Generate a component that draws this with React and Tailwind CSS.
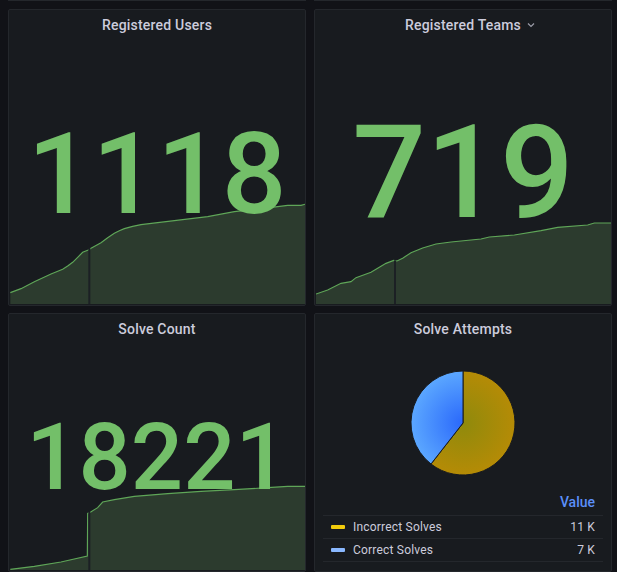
import React from 'react';

const roboto = { fontFamily: 'Roboto, sans-serif' };

// chart points are in 3x crop coordinates, viewBox maps them back down
const Spark = ({ points, gapX, box, className }) => {
  const [x, y, w, h] = box;
  const bottom = y + h;
  const line = points.map((p) => p.join(',')).join(' ');
  const first = points[0][0];
  const last = points[points.length - 1][0];
  return (
    <svg className={`absolute left-px bottom-px ${className}`} viewBox={box.join(' ')} preserveAspectRatio="none">
      <polygon points={`${first},${bottom} ${line} ${last},${bottom}`} fill="#2c3b2e" />
      <polyline points={line} fill="none" stroke="#5fa658" strokeWidth="3.5" />
      <rect x={gapX - 3} y={points.find((p) => p[0] >= gapX)[1] - 2} width="6" height={bottom} fill="#1c2024" />
    </svg>
  );
};

const Panel = ({ title, chevron, children }) => (
  <div className="relative flex flex-col overflow-hidden rounded-[2px] border border-[#24272c] bg-[#181b1f]">
    <div className="flex h-[30px] shrink-0 items-center justify-center text-[14px] font-medium tracking-[0.2px] text-[#ccccdc]">
      <span className="relative">
        {title}
        {chevron && (
          <svg className="absolute -right-[15px] top-[5px] h-[10px] w-[10px] text-[#9a9ca8]" viewBox="0 0 10 10" fill="none" stroke="currentColor" strokeWidth="1.2">
            <path d="M2 3.5 5 6.5 8 3.5" />
          </svg>
        )}
      </span>
    </div>
    {children}
  </div>
);

const BigValue = ({ value, className }) => (
  <div className={`relative z-10 flex flex-1 items-center justify-center font-medium leading-none text-[#73bf69] ${className}`}>
    {value}
  </div>
);

const usersLine = [[28,878],[60,866],[100,845],[150,822],[185,808],[200,798],[215,787],[230,772],[245,757],[262,750],[270,745],[300,728],[320,713],[340,700],[355,692],[370,686],[395,679],[420,674],[520,662],[620,650],[700,635],[760,628],[830,620],[860,616],[900,616],[915,612]];
const teamsLine = [[25,882],[60,870],[100,850],[130,845],[145,833],[190,817],[215,802],[235,790],[258,781],[268,783],[285,775],[310,758],[345,744],[385,732],[430,726],[520,717],[545,711],[620,705],[700,692],[750,682],[840,675],[860,669],[912,669]];
const solvesLine = [[28,793],[100,784],[180,771],[259,753],[260,625],[268,622],[290,608],[305,591],[340,584],[400,574],[500,566],[600,559],[700,554],[800,548],[860,544],[915,544]];

const Pie = () => (
  <svg className="h-[106px] w-[106px]" viewBox="-53 -53 106 106">
    <defs>
      <radialGradient id="yellowPie" gradientUnits="userSpaceOnUse" cx="0" cy="0" r="52">
        <stop offset="0" stopColor="#8f8a0c" />
        <stop offset="1" stopColor="#b58b06" />
      </radialGradient>
      <radialGradient id="bluePie" gradientUnits="userSpaceOnUse" cx="0" cy="0" r="52">
        <stop offset="0" stopColor="#2a68fb" />
        <stop offset="1" stopColor="#5ba7ff" />
      </radialGradient>
    </defs>
    <path d="M0 0 0 -52 A52 52 0 1 1 -32 41 Z" fill="url(#yellowPie)" stroke="#181b1f" strokeWidth="1" />
    <path d="M0 0 -32 41 A52 52 0 0 1 0 -52 Z" fill="url(#bluePie)" stroke="#181b1f" strokeWidth="1" />
  </svg>
);

const LegendRow = ({ color, name, value }) => (
  <div className="flex h-[23px] items-center border-b border-[#24272c] pl-2 pr-2 text-[12px] tracking-[0.2px] text-[#ccccdc]">
    <span className={`mr-2 h-[4px] w-[14px] rounded-[1px] ${color}`} />
    <span className="flex-1">{name}</span>
    <span>{value}</span>
  </div>
);

const App = () => {
  return (
    <div className="h-[572px] w-[617px] overflow-hidden bg-[#111217] pl-2" style={roboto}>
      {/* sliver of the row scrolled off above */}
      <div className="mb-2 grid h-px grid-cols-[298px_298px] gap-2">
        <div className="bg-[#24272c]" />
        <div className="bg-[#24272c]" />
      </div>
      <div className="grid grid-cols-[298px_298px] grid-rows-[297px_259px] gap-x-2 gap-y-[7px]">
        <Panel title="Registered Users">
          <BigValue value="1118" className="pt-[3px] text-[114px]" />
          <Spark points={usersLine} gapX={265} box={[27, 600, 888, 312]} className="h-[104px] w-[296px]" />
        </Panel>
        <Panel title="Registered Teams" chevron>
          <BigValue value="719" className="pt-[1px] text-[130px]" />
          <Spark points={teamsLine} gapX={262} box={[25, 600, 888, 312]} className="h-[104px] w-[296px]" />
        </Panel>
        <Panel title="Solve Count">
          <BigValue value="18221" className="text-[92px]" />
          <Spark points={solvesLine} gapX={265} box={[27, 495, 888, 300]} className="h-[100px] w-[296px]" />
        </Panel>
        <Panel title="Solve Attempts">
          <div className="flex flex-1 items-center justify-center pt-[8px]">
            <Pie />
          </div>
          <div className="mb-[9px] ml-2 mr-2">
            <div className="flex h-[23px] items-center justify-end border-b border-[#24272c] pb-[3px] pr-2 text-[14px] font-medium text-[#5b8ff9]">
              Value
            </div>
            <LegendRow color="bg-[#f2cc0c]" name="Incorrect Solves" value="11 K" />
            <LegendRow color="bg-[#8ab8ff]" name="Correct Solves" value="7 K" />
          </div>
        </Panel>
      </div>
    </div>
  );
};

export default App;
